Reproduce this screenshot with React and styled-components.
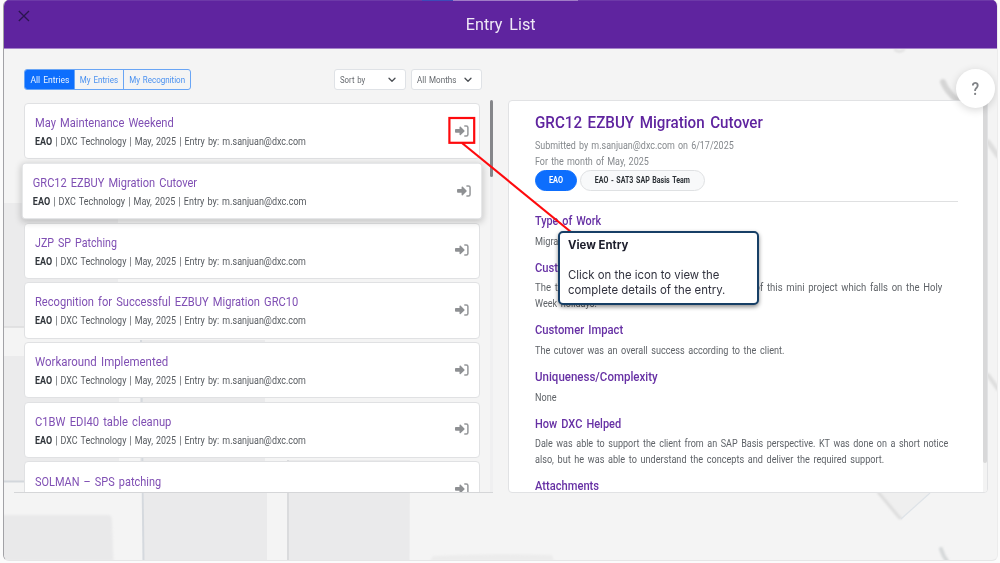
import React from "react";
import styled, { createGlobalStyle, css } from "styled-components";

const Global = createGlobalStyle`
  *, *::before, *::after { box-sizing: border-box; }
  body { margin: 0; background: #fbfbfb; font-family: Roboto, "Liberation Sans", sans-serif; color: #4d5156; overflow: hidden; }
  h1, h2, h3, p { margin: 0; font-weight: 400; }
  button { font: inherit; margin: 0; }
`;

const Label = styled.span`
  display: inline-block;
  white-space: nowrap;
  word-spacing: ${(p) => p.$ws || 0}px;
  transform: scaleX(${(p) => p.$sx || 1});
  transform-origin: ${(p) => p.$origin || "left"} center;
`;

const Frame = styled.div`
  position: relative;
  display: flex;
  flex-direction: column;
  width: 995px;
  height: 561px;
  margin-left: 2.6px;
  border-radius: 6px;
  overflow: hidden;
  background: #f4f4f4;
  border-bottom: 1px solid #e6e6e7;
  border-right: 1px solid #ececec;
  border-left: 1px solid #a2a2a6;
`;

const Backdrop = styled.svg`
  position: absolute;
  left: -3.6px;
  top: 0;
`;

const Header = styled.header`
  position: relative;
  display: flex;
  align-items: center;
  justify-content: center;
  flex: none;
  height: 48.6px;
  margin-left: -1px;
  margin-right: -1px;
  background: #5f249f;
  border-bottom: 1px solid #a583c9;
  border-top: 1px solid #6d39a8;
  color: #efe8f6;
`;

const HeaderTitle = styled.h1`
  font-size: 17px;
  line-height: 20px;
  padding: 0 0 1px 1px;
`;

const CloseButton = styled.button`
  position: absolute;
  left: 14.5px;
  top: 8.5px;
  width: 14px;
  height: 12px;
  padding: 0;
  border: 0;
  background: none;
  svg { display: block; }
`;

const Progress = styled.div`
  position: absolute;
  top: -1px;
  left: 419px;
  display: flex;
  width: 156px;
  height: 1px;
  background: linear-gradient(90deg, #3d4bb8 31px, #a07cc6 31px);
`;

const Content = styled.main`
  position: relative;
  display: flex;
  flex: 1;
  padding: 0 9px 0 10.4px;
`;

const ListPane = styled.section`
  width: 478.8px;
  padding-top: 20.4px;
`;

const Toolbar = styled.div`
  display: flex;
  justify-content: space-between;
  align-items: center;
  height: 21.5px;
  padding: 0 10px;
`;

const Tabs = styled.div`
  display: flex;
  height: 21.5px;
  border: 1px solid #69a5f5;
  border-radius: 3px;
  overflow: hidden;
`;

const Tab = styled.button`
  display: flex;
  align-items: center;
  justify-content: center;
  width: ${(p) => p.$w}px;
  padding: 0 0 1px 0;
  border: 0;
  border-left: ${(p) => (p.$on ? 0 : "1px solid #69a5f5")};
  background: ${(p) => (p.$on ? "#0d6efd" : "transparent")};
  color: ${(p) => (p.$on ? "#e9f2ff" : "#4a91f0")};
  font-size: 9.2px;
`;

const Filters = styled.div`
  display: flex;
  gap: 5px;
  margin-right: 0.3px;
`;

const Select = styled.button`
  display: flex;
  align-items: center;
  width: 71.5px;
  height: 21px;
  padding: 0 0 0 5px;
  border: 1px solid #dfe2e6;
  border-radius: 3px;
  background: #fff;
  color: #65696e;
  font-size: 9.4px;
`;

const SelectText = styled.span`
  width: 47.5px;
  text-align: left;
`;

const Scroller = styled.div`
  position: relative;
  height: 393px;
  margin-top: 9.5px;
  padding: 3.2px 12.6px 0 10px;
  overflow: hidden;
  border-bottom: 1px solid #d5d6d8;
`;

const ScrollTrack = styled.div`
  position: absolute;
  right: 0;
  top: 0.5px;
  bottom: 0;
  width: ${(p) => p.$w}px;
  background: ${(p) => p.$track};
  &::before {
    content: "";
    display: block;
    height: ${(p) => p.$len}px;
    border-radius: 2px;
    background: ${(p) => p.$thumb};
  }
`;

const Entry = styled.article`
  display: flex;
  align-items: center;
  justify-content: space-between;
  height: 56.3px;
  margin-bottom: 3.4px;
  padding: 1px 10.6px 0 9.6px;
  border: 1px solid #e0e1e3;
  border-radius: 4px;
  background: #fff;
  ${(p) =>
    p.$selected &&
    css`
      position: relative;
      transform: scale(1.01);
      box-shadow: 0 2px 7px rgba(0, 0, 0, 0.2);
    `}
`;

const EntryTitle = styled.h2`
  height: 17.8px;
  font-size: 12.4px;
  line-height: 15px;
  color: #8050b4;
`;

const EntryMeta = styled.p`
  height: 15px;
  font-size: 10px;
  line-height: 17px;
  color: #565a5f;
  b { font-weight: 700; color: #30353b; }
`;

const OpenButton = styled.span`
  display: flex;
  padding: 0 0 2px;
`;

const DetailPane = styled.section`
  position: relative;
  width: 479.5px;
  height: 393px;
  margin: 51.4px 0 0 15.3px;
  padding: 11.4px 0 0 25.8px;
  border: 1px solid #e1e2e4;
  border-radius: 4px;
  background: #fff;
  overflow: hidden;
`;

const DetailTitle = styled.h2`
  height: 25px;
  font-size: 17.2px;
  line-height: 20px;
  font-weight: 500;
  color: #5f249f;
`;

const DetailNote = styled.p`
  height: 15.6px;
  font-size: 10px;
  line-height: 18.6px;
  color: #85898d;
`;

const Pills = styled.div`
  display: flex;
  gap: 3.5px;
  margin-top: 1.3px;
`;

const Pill = styled.span`
  display: flex;
  align-items: center;
  justify-content: center;
  width: ${(p) => p.$w}px;
  height: 21px;
  border-radius: 11px;
  border: 1px solid ${(p) => (p.$primary ? "#0d6efd" : "#dfe1e3")};
  background: ${(p) => (p.$primary ? "#0d6efd" : "#f8f9fa")};
  color: ${(p) => (p.$primary ? "#fff" : "#2b3035")};
  font-size: 8.4px;
  font-weight: 700;
`;

const Rule = styled.hr`
  width: 423px;
  margin: 10px 0 9.9px;
  border: 0;
  border-top: 1px solid #dfe0e1;
`;

const Section = styled.div`
  padding-bottom: 10.2px;
  h3 {
    height: 20.8px;
    font-size: 12.6px;
    line-height: 17.5px;
    font-weight: 500;
    color: #6630a4;
  }
  p {
    height: 15.8px;
    font-size: 10px;
    line-height: 17.2px;
    color: #5f6368;
  }
`;

const HelpButton = styled.button`
  position: absolute;
  left: 952px;
  top: 69px;
  display: flex;
  align-items: center;
  justify-content: center;
  width: 39px;
  height: 39px;
  padding: 0;
  border: 0;
  border-radius: 50%;
  background: #fff;
  box-shadow: 0 2px 8px rgba(0, 0, 0, 0.16);
  color: #808387;
  font-size: 17.5px;
  font-weight: 500;
`;

const Pointer = styled.svg`
  position: absolute;
  left: 0;
  top: 0;
  pointer-events: none;
`;

const Callout = styled.aside`
  position: absolute;
  left: 558px;
  top: 231px;
  width: 201px;
  height: 73.5px;
  padding: 4.5px 0 0 7.6px;
  border: 2px solid #173f66;
  border-radius: 5px;
  background: #fff;
  box-shadow: 0 2px 4px rgba(0, 0, 0, 0.45);
  font-family: Inter, "Liberation Sans", sans-serif;
  font-size: 11.6px;
  line-height: 15px;
  color: #32333f;
  b { display: block; height: 30px; color: #1c1d2b; }
`;

const entries = [
  ["May Maintenance Weekend", 0.898],
  ["GRC12 EZBUY Migration Cutover", 0.882],
  ["JZP SP Patching", 0.862],
  ["Recognition for Successful EZBUY Migration GRC10", 0.899],
  ["Workaround Implemented", 0.924],
  ["C1BW EDI40 table cleanup", 0.905],
  ["SOLMAN – SPS patching", 0.884],
];

const sections = [
  ["Type of Work", 0.858, [["Migration", 0.92]]],
  [
    "Customer Expectation",
    0.89,
    [
      ["The team was able to deliver the scope and goal of this mini project which falls on the Holy", 0.949],
      ["Week holidays.", 0.91],
    ],
  ],
  ["Customer Impact", 0.892, [["The cutover was an overall success according to the client.", 0.908]]],
  ["Uniqueness/Complexity", 0.914, [["None", 0.91]]],
  [
    "How DXC Helped",
    0.874,
    [
      ["Dale was able to support the client from an SAP Basis perspective. KT was done on a short notice", 0.9],
      ["also, but he was able to understand the concepts and deliver the required support.", 0.913],
    ],
  ],
  ["Attachments", 0.885, []],
];

const Chevron = () => (
  <svg width="8" height="6" viewBox="0 0 8 6" fill="none" stroke="#4b4f54" strokeWidth="1.3" strokeLinecap="round" strokeLinejoin="round">
    <path d="M1 1.2 4 4.3 7 1.2" />
  </svg>
);

const EnterIcon = () => (
  <svg width="14" height="12" viewBox="0 0 14 12">
    <path d="M1.100 4.100h3.400V2.300c0-.7.700-1 1.200-.6l3.700 3.700c.3.300.3.700 0 1L5.700 10.100c-.5.500-1.200.2-1.200-.5V7.800H1.100C.5 7.800 0 7.400 0 6.800V5.100c0-.6.5-1 1.100-1Z" fill="#8e9093" />
    <path d="M9.800 .95h1.500c.9 0 1.600.7 1.600 1.500v7.100c0 .8-.7 1.500-1.600 1.500H9.800" fill="none" stroke="#96989b" strokeWidth="1.500" strokeLinecap="round" />
  </svg>
);

const Shapes = () => (
  <Backdrop width="1000" height="561" viewBox="0 0 1000 561">
    <defs>
      <filter id="soft"><feGaussianBlur stdDeviation="1" /></filter>
    </defs>
    <path d="M0 203H118V327H0Z" fill="#ebebec" />
    <path d="M0 327H118" stroke="#dcddde" strokeWidth="1.5" />
    <path d="M0 356H119V481H0Z" fill="#ebebec" />
    <path d="M0 481.500H119" stroke="#d3d7dc" strokeWidth="2" />
    <path d="M140 340H265V470H140Z" fill="#eaeaeb" />
    <path d="M144 492H267V561H143Z" fill="#eaeaeb" />
    <path d="M141 340 143.500 561" stroke="#d5d9de" strokeWidth="2" />
    <path d="M288 460H410L409.500 561H288Z" fill="#eaeaeb" />
    <path d="M288 460V561" stroke="#dadbdd" strokeWidth="2" />
    <path d="M0 515H108Q112 515 112 520L113.500 561H0Z" fill="#e9e9ea" filter="url(#soft)" />
    <path d="M430 561 433 556Q490 553 552 555L554 561Z" fill="#ececec" filter="url(#soft)" />
    <g fill="none" strokeLinecap="round" filter="url(#soft)">
      <path d="M895 50Q899 53 904 50" stroke="#dadada" strokeWidth="2" />
      <path d="M943 82Q947 92 957 100" stroke="#d5d5d5" strokeWidth="6" />
      <path d="M988 142 998 156" stroke="#dedede" strokeWidth="5" />
      <path d="M988 375 998 389" stroke="#dedede" strokeWidth="4" />
      <path d="M941 549Q943 556 947 561" stroke="#d5d8d9" strokeWidth="4" />
    </g>
    <path d="M877 492 901 519 930 492Z" fill="#efefef" />
    <path d="M878 492 898 516 901 519" fill="none" stroke="#dddddd" strokeWidth="3" filter="url(#soft)" />
    <path d="M901 519 930 493" stroke="#dde2e7" strokeWidth="1.200" />
  </Backdrop>
);

export default function App() {
  return (
    <>
      <Global />
      <Frame>
        <Shapes />
        <Header>
          <Progress />
          <CloseButton aria-label="Close">
            <svg width="14" height="12" viewBox="0 0 14 12" stroke="#2b1550" strokeWidth="1.300">
              <path d="M1.800 1 12 11M12 1 1.800 11" />
            </svg>
          </CloseButton>
          <HeaderTitle><Label $ws={3} $sx={0.95} $origin="center">Entry List</Label></HeaderTitle>
        </Header>
        <Content>
          <ListPane>
            <Toolbar>
              <Tabs>
                <Tab $on $w={49.5}><Label $ws={1} $sx={0.93} $origin="center">All Entries</Label></Tab>
                <Tab $w={48.5}><Label $ws={1} $sx={0.87} $origin="center">My Entries</Label></Tab>
                <Tab $w={66.8}><Label $ws={1} $sx={0.87} $origin="center">My Recognition</Label></Tab>
              </Tabs>
              <Filters>
                <Select><SelectText><Label $ws={1} $sx={0.83}>Sort by</Label></SelectText><Chevron /></Select>
                <Select><SelectText><Label $ws={1} $sx={0.86}>All Months</Label></SelectText><Chevron /></Select>
              </Filters>
            </Toolbar>
            <Scroller>
              {entries.map(([title, sx], i) => (
                <Entry key={title} $selected={i === 1}>
                  <div>
                    <EntryTitle><Label $ws={1.5} $sx={sx}>{title}</Label></EntryTitle>
                    <EntryMeta>
                      <Label $ws={1} $sx={0.894}><b>EAO</b> | DXC Technology | May, 2025 | Entry by: m.sanjuan@dxc.com</Label>
                    </EntryMeta>
                  </div>
                  <OpenButton><EnterIcon /></OpenButton>
                </Entry>
              ))}
              <ScrollTrack $w={2.8} $len={76.5} $thumb="#85868a" $track="#efeff0" />
            </Scroller>
          </ListPane>
          <DetailPane>
            <DetailTitle><Label $ws={2} $sx={0.883}>GRC12 EZBUY Migration Cutover</Label></DetailTitle>
            <DetailNote><Label $ws={1} $sx={0.894}>Submitted by m.sanjuan@dxc.com on 6/17/2025</Label></DetailNote>
            <DetailNote><Label $ws={1} $sx={0.898}>For the month of May, 2025</Label></DetailNote>
            <Pills>
              <Pill $primary $w={42}><Label $sx={0.88} $origin="center">EAO</Label></Pill>
              <Pill $w={124.5}><Label $ws={1} $sx={0.845} $origin="center">EAO - SAT3 SAP Basis Team</Label></Pill>
            </Pills>
            <Rule />
            {sections.map(([title, sx, lines]) => (
              <Section key={title}>
                <h3><Label $ws={1.5} $sx={sx}>{title}</Label></h3>
                {lines.map(([line, lx]) => (
                  <p key={line}><Label $ws={1.5} $sx={lx}>{line}</Label></p>
                ))}
              </Section>
            ))}
            <ScrollTrack $w={3.5} $len={361.5} $thumb="#d8d8d9" $track="#f3f3f3" />
          </DetailPane>
        </Content>
        <HelpButton><Label $sx={0.9} $origin="center">?</Label></HelpButton>
      </Frame>
      <Pointer width="1000" height="563" viewBox="0 0 1000 563" fill="none" stroke="#fe0a0d" strokeWidth="2.200">
        <rect x="449.400" y="118" width="24.800" height="24.800" />
        <path d="M462 143 571 232" />
      </Pointer>
      <Callout>
        <b><Label $sx={0.98}>View Entry</Label></b>
        <Label $sx={0.98}>Click on the icon to view the</Label>
        <Label $sx={0.985}>complete details of the entry.</Label>
      </Callout>
    </>
  );
}
